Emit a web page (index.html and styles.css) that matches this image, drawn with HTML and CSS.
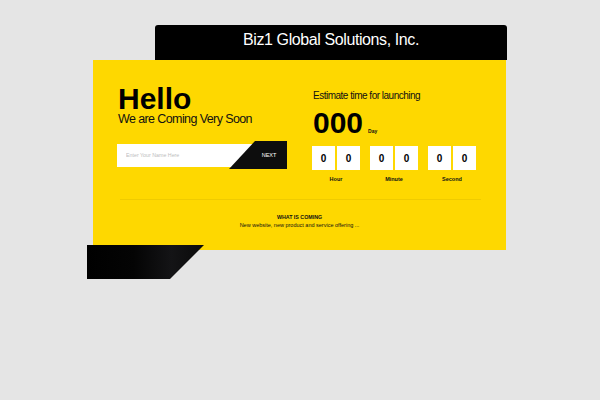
FILE: index.html
```html
<!DOCTYPE html>
<html>
<head>
<meta charset="utf-8">
<link rel="stylesheet" href="styles.css">
</head>
<body>
<div class="page">
  <div class="header">Biz1 Global Solutions, Inc.</div>
  <div class="panel">
    <div class="top">
      <div class="left">
        <h1 class="hello">Hello</h1>
        <p class="sub">We are Coming Very Soon</p>
        <form class="form">
          <input class="name" type="text" placeholder="Enter Your Name Here">
          <button class="next" type="button">NEXT</button>
        </form>
      </div>
      <div class="right">
        <p class="estimate">Estimate time for launching</p>
        <div class="days"><span class="big">000</span><span class="daylabel">Day</span></div>
        <div class="groups">
          <div class="group">
            <div class="boxes"><span class="box">0</span><span class="box">0</span></div>
            <div class="glabel">Hour</div>
          </div>
          <div class="group">
            <div class="boxes"><span class="box">0</span><span class="box">0</span></div>
            <div class="glabel">Minute</div>
          </div>
          <div class="group">
            <div class="boxes"><span class="box">0</span><span class="box">0</span></div>
            <div class="glabel">Second</div>
          </div>
        </div>
      </div>
    </div>
    <div class="sep"></div>
    <div class="coming">
      <div class="ctitle">WHAT IS COMING</div>
      <div class="ctext">New website, new product and service offering ...</div>
    </div>
  </div>
  <div class="ribbon"></div>
</div>
</body>
</html>
```
FILE: styles.css
```css
html, body {
  margin: 0;
  padding: 0;
  background: #e5e5e5;
  font-family: "Liberation Sans", Arial, sans-serif;
  color: #111;
}
.page {
  padding-top: 25px;
}
.header {
  margin-left: 155px;
  width: 352px;
  height: 35px;
  box-sizing: border-box;
  background: #000;
  border-radius: 3px 3px 0 0;
  color: #fff;
  font-size: 16px;
  letter-spacing: -0.4px;
  line-height: 30px;
  text-align: center;
}
.panel {
  margin-left: 93px;
  width: 413px;
  height: 190px;
  box-sizing: border-box;
  background: #fed800;
  padding: 24px 25px 0 25px;
}
.top {
  display: flex;
}
.left {
  width: 195px;
}
.hello {
  margin: 0;
  font-size: 30px;
  line-height: 30px;
  font-weight: bold;
  color: #000;
}
.sub {
  margin: 0;
  font-size: 12.5px;
  line-height: 10px;
  letter-spacing: -0.6px;
  color: #111;
}
.form {
  margin: 17px 0 0 -1px;
  display: flex;
  align-items: center;
  height: 28px;
}
.name {
  width: 140px;
  height: 23px;
  box-sizing: border-box;
  border: none;
  outline: none;
  margin: 0;
  padding: 0 0 0 9px;
  background: #fff;
  font-family: "Liberation Sans", Arial, sans-serif;
  font-size: 5.3px;
}
.name::placeholder {
  color: #bdbdbd;
}
.next {
  width: 58px;
  height: 28px;
  margin: 0 0 0 -28px;
  border: none;
  padding: 0 0 0 22px;
  background: #0d0d0d;
  color: #fff;
  font-family: "Liberation Sans", Arial, sans-serif;
  font-size: 5.5px;
  clip-path: polygon(26px 0, 58px 0, 58px 28px, 0 28px);
}
.right {
  padding-top: 6px;
}
.estimate {
  margin: 0;
  font-size: 10px;
  line-height: 12px;
  letter-spacing: -0.5px;
  color: #111;
}
.days {
  margin-top: 6px;
  display: flex;
  align-items: baseline;
  height: 30px;
}
.big {
  font-size: 30px;
  line-height: 30px;
  font-weight: bold;
  color: #000;
}
.daylabel {
  margin-left: 5px;
  font-size: 5px;
  font-weight: bold;
}
.groups {
  margin: 8px 0 0 -1px;
  display: flex;
  gap: 10px;
}
.group {
  display: flex;
  flex-direction: column;
  align-items: center;
}
.boxes {
  display: flex;
  gap: 2px;
}
.box {
  width: 23px;
  height: 24px;
  background: #fff;
  display: flex;
  align-items: center;
  justify-content: center;
  font-size: 10px;
  font-weight: bold;
  color: #000;
}
.glabel {
  margin-top: 5px;
  font-size: 5.5px;
  line-height: 8px;
  font-weight: bold;
}
.sep {
  margin: 16px 0 0 2px;
  height: 1px;
  background: #efcb00;
}
.coming {
  margin-top: 13px;
  text-align: center;
}
.ctitle {
  font-size: 5.3px;
  line-height: 8px;
  font-weight: bold;
}
.ctext {
  font-size: 5.5px;
  line-height: 9px;
}
.ribbon {
  margin: -5px 0 0 87px;
  width: 117px;
  height: 34px;
  background: linear-gradient(to right, #000 0%, #040404 40%, #141416 72%, #0a0a0a 100%);
  clip-path: polygon(0 0, 117px 0, 83px 34px, 0 34px);
}
```
